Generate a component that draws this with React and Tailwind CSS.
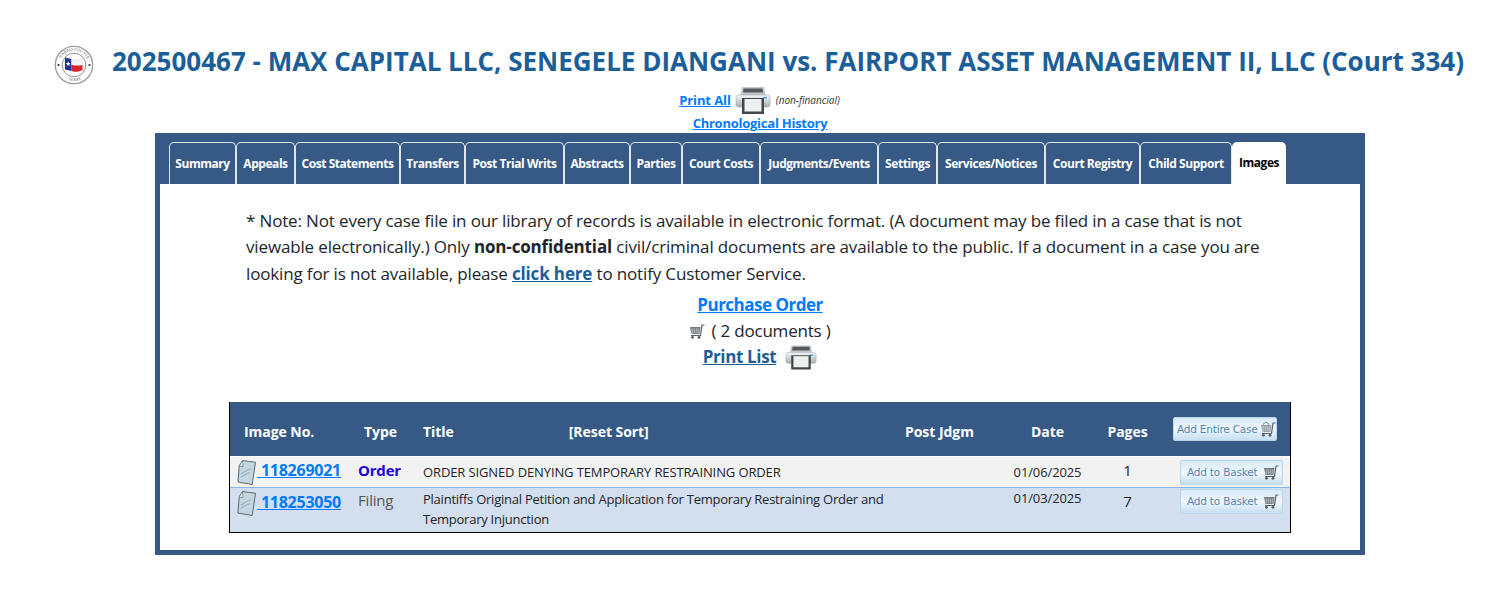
const tabs = [
  ['Summary', 'w-[67px]'],
  ['Appeals', 'w-[59px]'],
  ['Cost Statements', 'w-[105px]'],
  ['Transfers', 'w-[65px]'],
  ['Post Trial Writs', 'w-[99px]'],
  ['Abstracts', 'w-[66px]'],
  ['Parties', 'w-[52px]'],
  ['Court Costs', 'w-[78px]'],
  ['Judgments/Events', 'w-[118px]'],
  ['Settings', 'w-[59px]'],
  ['Services/Notices', 'w-[108px]'],
  ['Court Registry', 'w-[95px]'],
  ['Child Support', 'w-[92px]'],
];

function Seal() {
  return (
    <svg width="40" height="40" viewBox="0 0 40 40" className="shrink-0 mt-[7px]">
      <defs>
        <path id="sealtop" d="M5.500 20a14.500 14.500 0 0 1 29 0" />
        <path id="sealbottom" d="M4 20a16 16 0 0 0 32 0" />
      </defs>
      <circle cx="20" cy="20" r="18.700" fill="#fff" stroke="#9a9a9a" strokeWidth="1.300" />
      <circle cx="20" cy="20" r="11.800" fill="#fff" stroke="#777" strokeWidth="0.800" />
      <text fontSize="4" fill="#555" fontFamily="Liberation Serif, serif">
        <textPath href="#sealtop" startOffset="7">HARRIS COUNTY</textPath>
      </text>
      <text fontSize="4" fill="#555" fontFamily="Liberation Serif, serif">
        <textPath href="#sealbottom" startOffset="19">TEXAS</textPath>
      </text>
      <circle cx="4.500" cy="20" r="1.100" fill="#333" />
      <circle cx="35.500" cy="20" r="1.100" fill="#333" />
      <path d="M11 12.500l6.500 1.500v12l-6.500-1.500z" fill="#1f2f96" />
      <path d="M17.500 14c3 1.200 6.500 1.200 11 .3v5.700c-4 .8-8 .8-11-.3z" fill="#f4f4f4" stroke="#c8c8c8" strokeWidth="0.300" />
      <path d="M17.500 19.700c3 1.100 7 1.100 11 .3v5c-3 2-8.500 2.200-11 1z" fill="#dc2430" />
      <path d="M14.200 16.500l.7 1.600 1.700.1-1.300 1.100.4 1.700-1.500-.9-1.500.9.400-1.700-1.300-1.100 1.700-.1z" fill="#fff" />
    </svg>
  );
}

function Printer({ className }) {
  return (
    <svg viewBox="0 0 36 27" className={className}>
      <defs>
        <linearGradient id="prbody" x1="0" y1="0" x2="0" y2="1">
          <stop offset="0" stopColor="#f6f8fa" />
          <stop offset="1" stopColor="#a5adb4" />
        </linearGradient>
      </defs>
      <path d="M7 0h22l1.500 8h-25z" fill="#c4c8cc" />
      <path d="M8.500 1.500h19l.5 4h-20z" fill="#55595d" />
      <rect x="1" y="8" width="34" height="12" rx="2.500" fill="url(#prbody)" stroke="#a0a7ad" strokeWidth="0.600" />
      <rect x="28" y="10" width="4" height="1.600" fill="#58a8d8" />
      <rect x="7" y="11" width="22" height="16" fill="#44474a" />
      <rect x="9.500" y="12" width="17" height="12.500" fill="#eef0f0" />
    </svg>
  );
}

function Cart({ className, basket }) {
  return (
    <svg viewBox="0 0 16 15" className={className}>
      <path d="M1 3h10.500l-1 7H2.500z" fill={basket ? '#9aa4aa' : '#727a7e'} />
      <path d="M3.500 4v5.500M5.500 4v5.500M7.500 4v5.500M9.500 4v5.500M1.500 6h9.500M2 8h8.500" stroke="#c3ccd0" strokeWidth="0.500" />
      {basket && <path d="M3 3.500c0-4 6-4 6 0" fill="none" stroke="#8a9399" strokeWidth="1" />}
      <path d="M15.500 1h-2.500l-1.500 10.500H2" fill="none" stroke="#5b6266" strokeWidth="1.200" />
      <circle cx="3.500" cy="13.300" r="1.400" fill="#55595c" />
      <circle cx="10" cy="13.300" r="1.400" fill="#55595c" />
    </svg>
  );
}

function DocIcon() {
  return (
    <svg viewBox="0 0 20 25" className="w-[20px] h-[25px] shrink-0">
      <path d="M5.500.5l13 1.800-3.300 22.200L1 22l1.200-16z" fill="#c3d6e2" stroke="#5f6a72" strokeWidth="1" />
      <path d="M4 14c4-3 6-4 10-5.500M3.500 17.500c3.500-2.500 6-3.500 9.500-5" stroke="#9bb2c0" strokeWidth="1.200" fill="none" />
      <path d="M5.500.5L2.200 6l3.800.6z" fill="#eef2f4" stroke="#5f6a72" strokeWidth="0.600" />
    </svg>
  );
}

function BasketButton({ label, wide }) {
  return (
    <button
      className={`flex items-center border border-[#bcd6ec] rounded-[2px] bg-gradient-to-b from-[#d6e9f8] via-[#f0f7fd] to-[#c4def3] text-[#5587b4] text-[10.500px] font-normal font-["DejaVu_Sans",sans-serif] tracking-[-0.2px] ${wide ? 'w-[104px] h-[24px] pl-[3px] gap-[2px]' : 'w-[103px] h-[25px] pl-[6px] gap-[6px]'}`}
    >
      <span className="whitespace-nowrap">{label}</span>
      <Cart className="w-[16px] h-[15px]" basket={wide} />
    </button>
  );
}

const rowCols = 'grid grid-cols-[128px_65px_477px_100px_95px_65px_1fr]';

export default function App() {
  return (
    <div className='w-[1498px] h-[610px] bg-white overflow-hidden text-[#212529] font-["Open_Sans","Noto_Sans",sans-serif]'>
      {/* case heading */}
      <div className="flex items-center pt-[41px] pl-[54px] h-[81px]">
        <Seal />
        <h1 className="ml-[18px] text-[26px] leading-[40px] font-bold text-[#1b5e98] whitespace-nowrap">
          202500467 - MAX CAPITAL LLC, SENEGELE DIANGANI vs. FAIRPORT ASSET MANAGEMENT II, LLC (Court 334)
        </h1>
      </div>

      <div className="flex items-center justify-center h-[38px] pl-[21px] pt-[1px]">
        <a href="#" className="text-[13px] font-bold text-[#007bff] underline tracking-[-0.1px]">Print All</a>
        <Printer className="w-[36px] h-[27px] ml-[4px]" />
        <span className="ml-[5px] text-[10px] italic text-[#333]">(non-financial)</span>
      </div>
      <div className="text-center h-[14px] leading-[6px] pl-[22px]">
        <a href="#" className="text-[13px] font-bold text-[#007bff] underline tracking-[-0.25px]">Chronological History</a>
      </div>

      {/* tabbed panel */}
      <div className="w-[1210px] h-[422px] ml-[155px] bg-[#365a85] pt-[9px] px-[5px] pb-[5px] flex flex-col">
        <div className="flex pl-[9px] h-[42px] shrink-0">
          {tabs.map(([name, w]) => (
            <div
              key={name}
              className={`${w} shrink-0 flex items-center justify-center border-t border-x border-[#dfe5ec] rounded-t-[5px] text-white text-[12px] font-bold whitespace-nowrap tracking-[-0.45px]`}
            >
              {name}
            </div>
          ))}
          <div className="w-[54px] shrink-0 flex items-center justify-center bg-white rounded-t-[5px] text-black text-[12px] font-bold tracking-[-0.45px]">
            Images
          </div>
        </div>

        <div className="flex-1 bg-white flex flex-col">
          <p className="ml-[86px] w-[1025px] mt-[23.700px] text-[17px] leading-[26.500px] tracking-[-0.15px] text-[#212529]">
            * Note: Not every case file in our library of records is available in electronic format. (A document may be filed in a case that is not viewable electronically.) Only <b className="font-bold">non-confidential</b> civil/criminal documents are available to the public. If a document in a case you are looking for is not available, please <a href="#" className="font-bold underline text-[#1b5e98]">click here</a> to notify Customer Service.
          </p>

          <div className="flex flex-col items-center mt-[5.300px] text-[17px] leading-[26px]">
            <a href="#" className="font-bold text-[#007bff] underline tracking-[-0.5px]">Purchase Order</a>
            <div className="flex items-center gap-[6px] tracking-[-0.2px]">
              <Cart className="w-[16px] h-[15px]" />
              <span>( 2 documents )</span>
            </div>
            <div className="flex items-center h-[26px]">
              <a href="#" className="font-bold text-[#1b5e98] underline tracking-[-0.35px]">Print List</a>
              <Printer className="w-[32px] h-[25px] ml-[9px]" />
            </div>
          </div>

          {/* image table */}
          <div className="ml-[69px] mt-[32px] w-[1062px] border-x border-b border-black">
            <div className={`${rowCols} h-[54px] items-center bg-[#365a85] text-white text-[14px] font-bold tracking-[-0.05px]`}>
              <div className="pl-[14px] pt-[4px]">Image No.</div>
              <div className="pl-[6px] pt-[4px]">Type</div>
              <div className="flex pt-[4px]">
                <span>Title</span>
                <span className="ml-[115px]">[Reset Sort]</span>
              </div>
              <div className="pl-[5px] pt-[4px]">Post Jdgm</div>
              <div className="text-center pt-[4px]">Date</div>
              <div className="text-center pt-[4px]">Pages</div>
              <div className="pl-[13px]"><BasketButton label="Add Entire Case" wide /></div>
            </div>

            <div className={`${rowCols} h-[31px] mt-[1px] items-center bg-[#f2f2f2] border-b border-[#8ab4ea]`}>
              <div className="flex items-center pl-[7px]">
                <DocIcon />
                <a href="#" className="pb-[4px] text-[16px] font-bold text-[#007bff] underline tracking-[-0.25px] whitespace-pre"> 118269021</a>
              </div>
              <div className="pb-[4px] text-[15px] font-bold text-[#2400e0] tracking-[-0.2px]">Order</div>
              <div className="text-[13px] tracking-[-0.12px] text-[#212529]">ORDER SIGNED DENYING TEMPORARY RESTRAINING ORDER</div>
              <div />
              <div className="text-[13px] text-center tracking-[-0.12px]">01/06/2025</div>
              <div className="pb-[4px] text-[15px] text-center">1</div>
              <div className="pl-[20px]"><BasketButton label="Add to Basket" /></div>
            </div>

            <div className={`${rowCols} h-[44px] items-start bg-[#d3deef]`}>
              <div className="flex items-center pl-[7px] pt-[2px]">
                <DocIcon />
                <a href="#" className="pb-[2px] text-[16px] font-bold text-[#007bff] underline tracking-[-0.25px] whitespace-pre"> 118253050</a>
              </div>
              <div className="text-[15px] text-[#555] pt-[1px] tracking-[-0.2px]">Filing</div>
              <div className="text-[13px] leading-[20px] pt-[1px] tracking-[-0.24px] text-[#212529]">
                Plaintiffs Original Petition and Application for Temporary Restraining Order and Temporary Injunction
              </div>
              <div />
              <div className="text-[13px] text-center tracking-[-0.12px] pt-[1px]">01/03/2025</div>
              <div className="text-[15px] text-center pt-[2px]">7</div>
              <div className="pl-[20px] pt-[1px]"><BasketButton label="Add to Basket" /></div>
            </div>
          </div>
        </div>
      </div>
    </div>
  );
}
